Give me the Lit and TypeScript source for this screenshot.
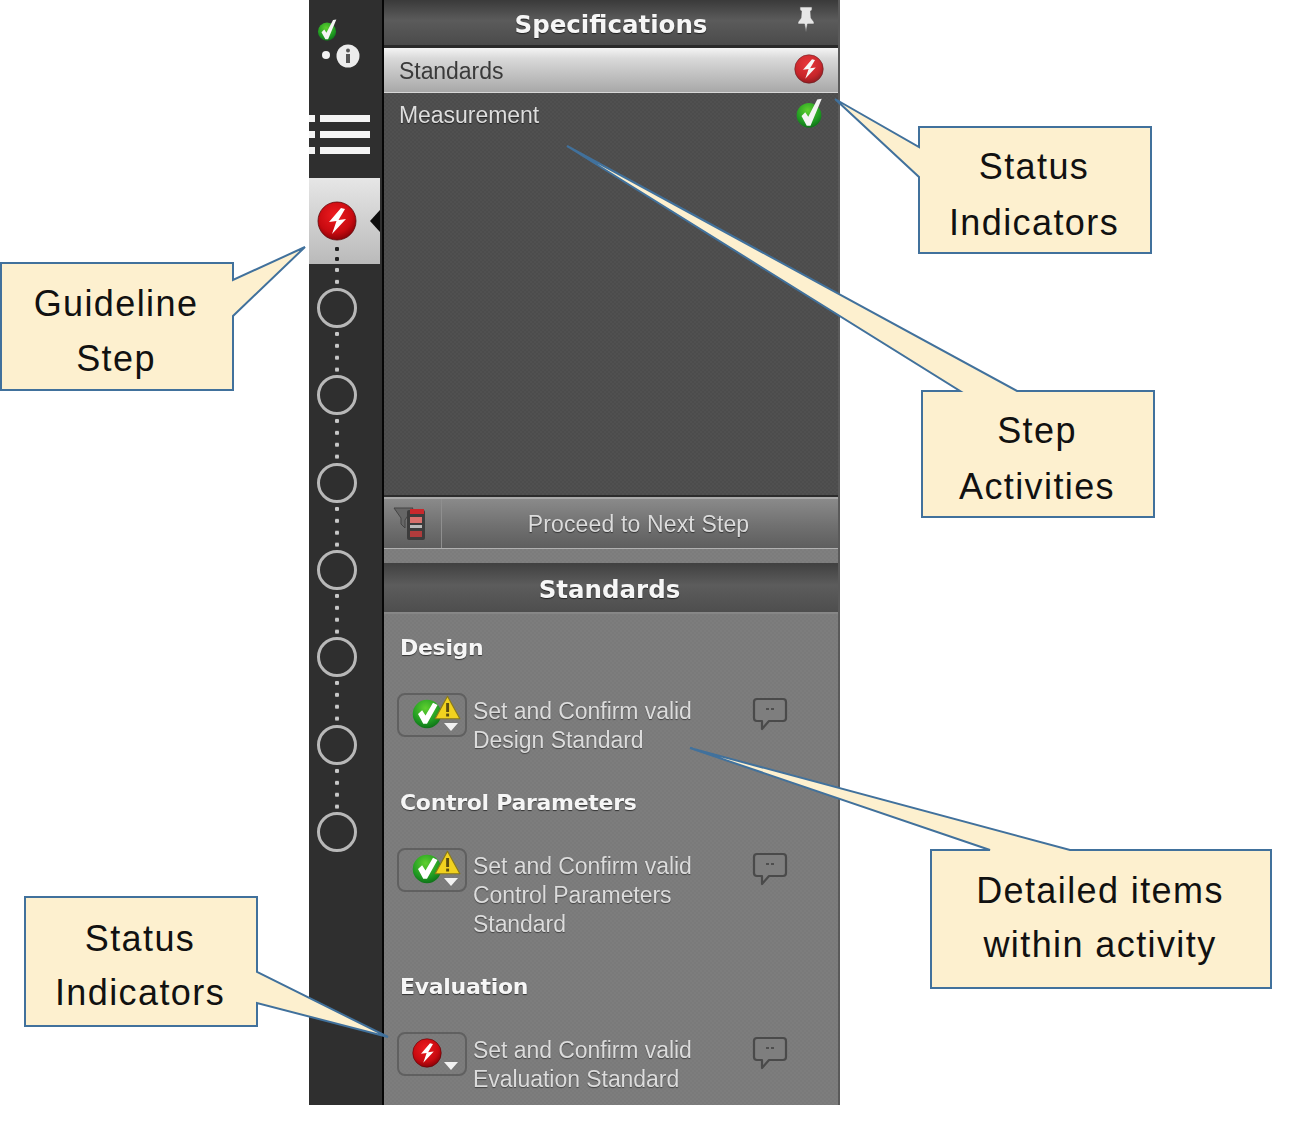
import { LitElement, html, css, svg } from "lit";
import { customElement } from "lit/decorators.js";

const defs = svg`<defs>
  <radialGradient id="rg" cx="45%" cy="35%" r="70%"><stop offset="0" stop-color="#ee1c20"/><stop offset=".65" stop-color="#c80a10"/><stop offset="1" stop-color="#7c0006"/></radialGradient>
  <radialGradient id="gg" cx="45%" cy="30%" r="75%"><stop offset="0" stop-color="#5fd02f"/><stop offset=".65" stop-color="#1f9a22"/><stop offset="1" stop-color="#0b6a16"/></radialGradient>
</defs>`;
const bolt = "M24 7 L12 21 L19.5 20 L15 33 L29 18 L21.5 19 L28 8 Z";
const check = "M8 20 L13.5 15 L18 22 L28 5 L34 8 L20 33 L15 33 Z";
const tallCheck = "M10 24 L15 19 L19 25 L31 2 L37 1 L22 37 L17 37 Z";

const redIcon = (cls: string) => html`<svg class=${cls} viewBox="0 0 40 40">${defs}<circle cx="20" cy="20" r="19" fill="url(#rg)" stroke="#5c0508" stroke-width=".8"/><path d=${bolt} fill="#fff"/></svg>`;
const greenIcon = (cls: string) => html`<svg class=${cls} viewBox="0 0 40 40">${defs}<circle cx="20" cy="20" r="19" fill="url(#gg)"/><path d=${check} fill="#fff"/></svg>`;
const tallGreen = (cls: string) => html`<svg class=${cls} viewBox="0 0 40 40">${defs}<circle cx="20" cy="23" r="16.5" fill="url(#gg)"/><path d=${tallCheck} fill="#f4f4f4"/></svg>`;

const toggle = (warn: boolean, red: boolean) => html`<div class="toggle">
  ${red ? redIcon("tog-ic") : greenIcon("tog-ic")}
  ${warn ? html`<svg class="warn" viewBox="0 0 24 22"><path d="M12 1 L23 21 L1 21 Z" fill="#f2d21f" stroke="#8a7a18" stroke-width="1" stroke-linejoin="round"/><rect x="10.8" y="7" width="2.6" height="8" fill="#5a4c10"/><rect x="10.8" y="16.4" width="2.6" height="2.6" fill="#5a4c10"/></svg>` : ""}
  <svg class="caret" viewBox="0 0 14 8"><path d="M0 0 H14 L7 8 Z" fill="#f2f2f2"/></svg>
</div>`;

const bubble = html`<svg class="bubble" viewBox="0 0 36 34"><path d="M5 2 H31 Q34 2 34 5 V21 Q34 24 31 24 H17 L10 32 V24 H5 Q2 24 2 21 V5 Q2 2 5 2 Z" fill="#7e7e7e" stroke="#4a4a4a" stroke-width="2.2" stroke-linejoin="round"/><rect x="14" y="11" width="3" height="2" fill="#4e4e4e"/><rect x="19" y="11" width="3" height="2" fill="#4e4e4e"/></svg>`;

const sections = [
  { title: "Design", warn: true, red: false, lines: ["Set and Confirm valid", "Design Standard"] },
  { title: "Control Parameters", warn: true, red: false, lines: ["Set and Confirm valid", "Control Parameters", "Standard"] },
  { title: "Evaluation", warn: false, red: true, lines: ["Set and Confirm valid", "Evaluation Standard"] },
];

const callouts = [
  { pts: "919,127 1151,127 1151,253 919,253 919,177 835,99 919,147", x: 918, y: 139, w: 232, lines: ["Status", "Indicators"], lh: 56 },
  { pts: "922,391 960,391 567,146 1017,391 1154,391 1154,517 922,517", x: 921, y: 403, w: 232, lines: ["Step", "Activities"], lh: 56 },
  { pts: "1,263 233,263 233,280 305,247 233,316 233,390 1,390", x: 0, y: 276, w: 232, lines: ["Guideline", "Step"], lh: 55 },
  { pts: "25,897 257,897 257,972 388,1037 257,1003 257,1026 25,1026", x: 24, y: 912, w: 232, lines: ["Status", "Indicators"], lh: 54 },
  { pts: "931,850 990,850 690,748 1070,850 1271,850 1271,988 931,988", x: 930, y: 864, w: 340, lines: ["Detailed items", "within activity"], lh: 54 },
];

@customElement("app-root")
export class AppRoot extends LitElement {
  static styles = css`
    :host { display: block; width: 1299px; height: 1125px; position: relative; background: #fff; overflow: hidden; font-family: "Liberation Sans", Arial, sans-serif; }
    .stage { display: flex; padding-left: 309px; height: 1105px; filter: blur(0.7px); }
    .rail { width: 73px; background: #2f2f2f; display: flex; flex-direction: column; flex: none; }
    .status { height: 100px; width: 56px; position: relative; flex: none; }
    .st-check { position: absolute; left: 7px; top: 19px; width: 22px; height: 22px; }
    .st-dot { position: absolute; left: 13px; top: 51px; width: 8px; height: 8px; border-radius: 50%; background: #f2f2f2; }
    .st-info { position: absolute; left: 27px; top: 44px; width: 24px; height: 24px; }
    .list { height: 76px; flex: none; display: flex; flex-direction: column; gap: 9px; padding-top: 15px; box-sizing: border-box; }
    .ln { display: flex; gap: 5px; height: 7px; }
    .ln i { width: 6px; background: #f4f4f4; }
    .ln b { width: 50px; background: #f4f4f4; }
    .steps { display: flex; flex-direction: column; align-items: center; width: 56px; }
    .active { width: 71px; height: 86px; margin-top: 2px; flex: none; background: linear-gradient(#e6e6e6, #bababa); position: relative; display: flex; flex-direction: column; box-sizing: border-box; padding: 23px 0 0 8px; }
    .active .big { width: 40px; height: 40px; }
    .active::after { content: ""; position: absolute; right: 0; top: 32px; border: 11px solid transparent; border-right: 10px solid #0c0c0c; border-left: 0; }
    .adots { width: 4px; height: 22px; margin: 1px 0 0 18px; background: radial-gradient(circle, #222 2px, transparent 2.4px) 0 0 / 4px 10px repeat-y; background-position: 0 2px; }
    .ring { width: 40px; height: 40px; border-radius: 50%; border: 3px solid #b8b8b8; box-sizing: border-box; flex: none; }
    .conn { width: 4px; height: 47.33px; flex: none; background: radial-gradient(circle, #c8c8c8 2px, transparent 2.4px) 0 0 / 4px 11.9px repeat-y; }
    .conn.first { height: 24px; }
    .black { width: 2px; background: #060606; flex: none; }
    .panel { width: 454px; flex: none; display: flex; flex-direction: column; border-right: 2px solid #5a5a5a; background: #2c2c2c; overflow: hidden; }
    .dither { background-image: conic-gradient(rgba(255,255,255,.025) 25%, transparent 0 50%, rgba(255,255,255,.025) 0 75%, transparent 0); background-size: 4px 4px; }
    .head { flex: none; display: flex; align-items: center; justify-content: center; color: #f6f6f6; font-family: "DejaVu Sans", sans-serif; font-weight: 700; font-size: 24.5px; text-shadow: 0 1px 1px #222; position: relative; box-sizing: border-box; }
    .spec { height: 48px; padding-top: 3px; background: linear-gradient(#3a3a3a, #5b5b5b 45%, #4b4b4b); border-bottom: 3px solid #2a2a2a; }
    .pin { position: absolute; right: 20px; top: 6px; width: 24px; height: 28px; }
    .row { height: 45px; flex: none; display: flex; align-items: center; justify-content: space-between; box-sizing: border-box; font-size: 23px; padding: 0 14px 0 15px; letter-spacing: -.05px; }
    .row.sel { background: linear-gradient(#f4f4f4, #d8d8d8 25%, #a8a8a8); color: #3a3a3a; border-bottom: 1px solid #d8d8d8; padding-top: 3px; }
    .row.off { color: #dedede; text-shadow: 0 1px 1px #222; }
    .ri { width: 30px; height: 30px; margin-top: -6px; }
    .ri2 { width: 30px; height: 30px; margin: -6px 0 0 0; }
    .dim { opacity: .85; display: flex; }
    .dark { height: 402px; flex: none; background-color: #4c4c4c; display: flex; flex-direction: column; }
    .next { margin-top: 2px; height: 51px; flex: none; display: flex; background: linear-gradient(#8a8a8a, #707070 55%, #5e5e5e); border-top: 2px solid #a8a8a8; box-sizing: border-box; }
    .next-ic { width: 58px; flex: none; border-right: 1px solid #8f8f8f; display: flex; align-items: center; justify-content: center; padding-right: 6px; box-sizing: border-box; }
    .next-ic svg { width: 34px; height: 36px; }
    .next-t { flex: 1; text-align: center; color: #dcdcdc; font-size: 23px; line-height: 50px; letter-spacing: .15px; text-shadow: 0 1px 1px #333; padding-right: 3px; }
    .strip { height: 15px; flex: none; background-color: #7c7c7c; border-top: 1px solid #b0b0b0; box-sizing: border-box; }
    .std { height: 49px; padding: 3px 3px 0 0; background: linear-gradient(#404040, #5c5c5c 45%, #4e4e4e); }
    .body { flex: 1; min-height: 0; background-color: #7a7a7a; padding: 21px 0 0 16px; display: flex; flex-direction: column; box-shadow: inset 0 2px 1px #888; }
    .title { flex: none; height: 30px; line-height: 30px; font-family: "DejaVu Sans", sans-serif; font-weight: 700; font-size: 22px; letter-spacing: -.3px; color: #f6f6f6; text-shadow: 0 1px 1px #333; }
    .item { flex: none; margin-top: 30px; margin-bottom: 33px; display: grid; grid-template-columns: 71px 284px 36px; margin-left: -3px; align-items: start; }
    .toggle { width: 70px; height: 44px; border: 2px solid #606060; border-radius: 8px; box-sizing: border-box; position: relative; }
    .tog-ic { position: absolute; left: 13px; top: 4px; width: 30px; height: 30px; }
    .warn { position: absolute; left: 35px; top: 0; width: 27px; height: 25px; }
    .caret { position: absolute; left: 45px; top: 28px; width: 14px; height: 8px; }
    .txt { padding-top: 4px; padding-left: 5px; font-size: 23px; line-height: 29px; color: #dcdcdc; letter-spacing: -.05px; text-shadow: 0 1px 1px #444; }
    .bubble { width: 36px; height: 34px; margin-top: 4px; }
    .over { position: absolute; left: 0; top: 0; width: 1299px; height: 1125px; pointer-events: none; }
    .box { position: absolute; text-align: center; color: #111; font-family: "Liberation Sans", Arial, sans-serif; font-size: 36px; letter-spacing: 1.4px; }
  `;

  render() {
    const boxes = callouts.map(c => html`<div class="box" style="left:${c.x}px;top:${c.y}px;width:${c.w}px;line-height:${c.lh}px">${c.lines.map(l => html`<div>${l}</div>`)}</div>`);
    return html`
      <div class="stage">
        <div class="rail">
          <div class="status">
            ${tallGreen("st-check")}
            <div class="st-dot"></div>
            <svg class="st-info" viewBox="0 0 24 24"><circle cx="12" cy="12" r="11.5" fill="#ececec"/><circle cx="12" cy="6.5" r="2" fill="#555"/><rect x="10" y="10" width="4" height="9" fill="#555"/></svg>
          </div>
          <div class="list">
            <div class="ln"><i></i><b></b></div>
            <div class="ln"><i></i><b></b></div>
            <div class="ln"><i></i><b></b></div>
          </div>
          <div class="active">${redIcon("big")}<div class="adots"></div></div>
          <div class="steps">
            <div class="conn first"></div>
            ${[0, 1, 2, 3, 4, 5, 6].map(i => html`<div class="ring"></div>${i < 6 ? html`<div class="conn"></div>` : ""}`)}
          </div>
        </div>
        <div class="black"></div>
        <div class="panel">
          <div class="head spec">Specifications
            <svg class="pin" viewBox="0 0 24 28"><path d="M6 1 H18 V4 L16.5 5 L17 12 L20 16 V18 H13.5 L12 26 L10.5 18 H4 V16 L7 12 L7.5 5 L6 4 Z" fill="#e6e6e6" stroke="#555" stroke-width=".6"/></svg>
          </div>
          <div class="row sel"><span>Standards</span><span class="dim">${redIcon("ri")}</span></div>
          <div class="dark dither">
            <div class="row off"><span>Measurement</span>${tallGreen("ri2")}</div>
          </div>
          <div class="next">
            <div class="next-ic"><svg viewBox="0 0 34 36"><path d="M1 2 H20 L12 14 V22 L8 18 V12 Z" fill="#666" stroke="#444"/><rect x="14" y="4" width="18" height="30" rx="2" fill="#3c3c3c"/><rect x="17" y="3" width="14" height="5" fill="#c8282c"/><rect x="17" y="11" width="12" height="6" fill="#d8706c"/><rect x="17" y="19" width="12" height="3" fill="#bbb"/><rect x="17" y="25" width="12" height="6" fill="#b03c3c"/></svg></div>
            <div class="next-t">Proceed to Next Step</div>
          </div>
          <div class="strip dither"></div>
          <div class="head std">Standards</div>
          <div class="body dither">
            ${sections.map(s => html`
              <div class="title">${s.title}</div>
              <div class="item">
                ${toggle(s.warn, s.red)}
                <div class="txt">${s.lines.map(l => html`<div>${l}</div>`)}</div>
                ${bubble}
              </div>`)}
          </div>
        </div>
      </div>
      <svg class="over" viewBox="0 0 1299 1125">
        ${callouts.map(c => svg`<polygon points=${c.pts} fill="#fdf0cf" stroke="#41719c" stroke-width="2"/>`)}
      </svg>
      ${boxes}
    `;
  }
}
